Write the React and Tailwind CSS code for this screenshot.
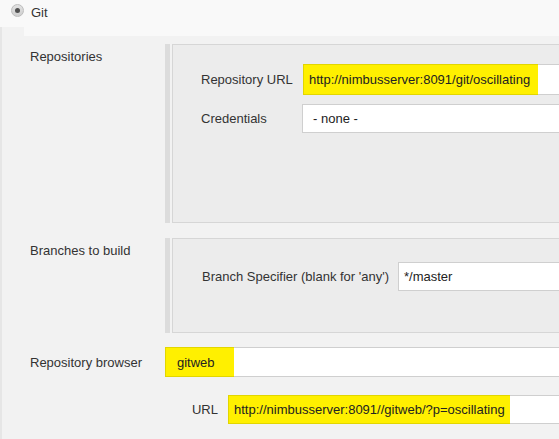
import React from "react";

// yellow-marked text field: highlight block + the rest of the white box
function Field({ text, h = "h-[30px]", pad = "pl-[5px]", mark, markW = "w-[235px]" }) {
  if (mark) {
    return (
      <div className={`flex flex-1 ${h}`}>
        <div className={`flex items-center ${markW} ${pad} bg-[#fff000] border border-r-0 border-[#e2d600] text-[#222] whitespace-nowrap`}>
          {text}
        </div>
        <div className="flex-1 bg-white border border-l-0 border-[#cfcfcf]" />
      </div>
    );
  }
  return (
    <div className={`flex flex-1 items-center ${h} ${pad} bg-white border border-[#cfcfcf] text-[#222] whitespace-nowrap`}>
      {text}
    </div>
  );
}

function Radio() {
  return (
    <div className="mt-[4px] ml-[11px] w-[13px] h-[13px] rounded-full border border-[#bdbdbd] bg-gradient-to-b from-[#e2e2e2] to-[#cfcfcf] flex items-center justify-center">
      <div className="w-[5px] h-[5px] rounded-full bg-[#505050]" />
    </div>
  );
}

export default function App() {
  return (
    <div className="w-[559px] h-[439px] overflow-hidden bg-[#f2f2f2] font-['Liberation_Sans',Arial,sans-serif] text-[13px] leading-[15px] text-[#333]">
      <div className="w-[640px]">
        {/* Git header */}
        <div className="flex items-start h-[27px] bg-[#f9f9f9]">
          <Radio />
          <span className="ml-[7px] mt-[5px] text-[#333]">Git</span>
        </div>

        <div className="border-l-2 border-[#e6e6e6] h-[412px]">
          <div className="flex h-[9px]">
            <div className="w-[22px]" />
            <div className="flex-1 bg-[#f9f9f9]" />
          </div>

          {/* Repositories */}
          <div className="flex mt-[8px]">
            <div className="w-[163px] pl-[28px] pt-[5px]">Repositories</div>
            <div className="w-[5px] bg-[#dcdcdc]" />
            <div className="ml-[2px] flex-1 h-[179px] border border-[#d6d6d6] bg-[#ececec] pt-[19px] pl-[28px]">
              <div className="flex items-center">
                <div className="w-[102px]">Repository URL</div>
                <Field text="http://nimbusserver:8091/git/oscillating" h="h-[31px]" mark markW="w-[235px]" />
              </div>
              <div className="flex items-center mt-[9px]">
                <div className="w-[101px]">Credentials</div>
                <Field text="- none -" h="h-[29px]" pad="pl-[10px]" />
              </div>
            </div>
          </div>

          {/* Branches */}
          <div className="flex mt-[15px]">
            <div className="w-[163px] pl-[28px] pt-[5px]">Branches to build</div>
            <div className="w-[5px] bg-[#dcdcdc]" />
            <div className="ml-[2px] flex-1 h-[95px] border border-[#d6d6d6] bg-[#ececec] pt-[23px] pl-[29px]">
              <div className="flex items-center">
                <div className="w-[196px]">Branch Specifier (blank for 'any')</div>
                <Field text="*/master" h="h-[29px]" pad="pl-[5px]" />
              </div>
            </div>
          </div>

          {/* Repository browser */}
          <div className="flex items-center mt-[14px]">
            <div className="w-[163px] pl-[28px]">Repository browser</div>
            <Field text="gitweb" h="h-[30px]" pad="pl-[11px]" mark markW="w-[69px]" />
          </div>

          <div className="flex items-center mt-[18px]">
            <div className="w-[226px] pr-[10px] text-right">URL</div>
            <Field text="http://nimbusserver:8091//gitweb/?p=oscillating" h="h-[29px]" pad="pl-[5px]" mark markW="w-[282px]" />
          </div>
        </div>
      </div>
    </div>
  );
}
